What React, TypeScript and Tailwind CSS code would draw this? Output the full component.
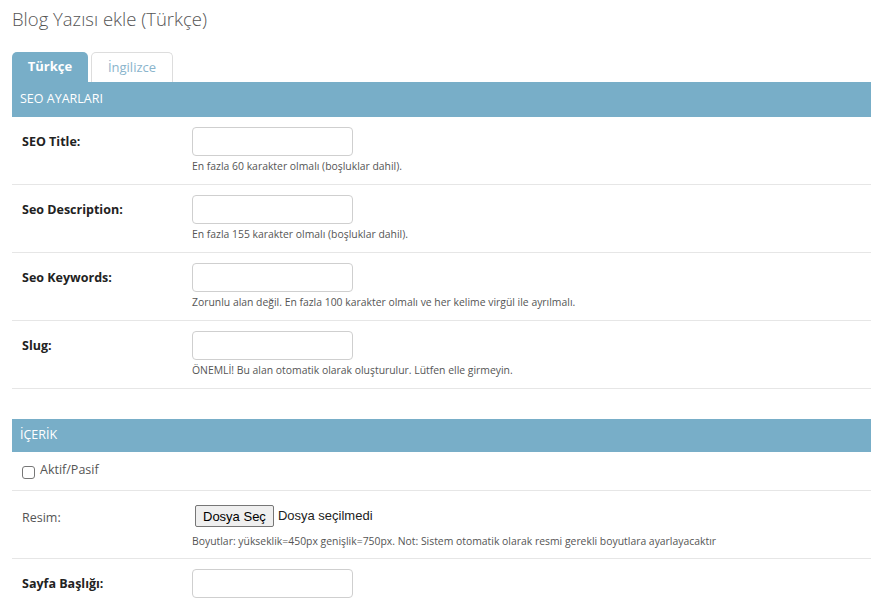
import React from "react";

const font = { fontFamily: '"Open Sans", "Noto Sans", sans-serif' };

function Row({ label, bold = true, help, children }: { label: string; bold?: boolean; help?: string; children?: React.ReactNode }) {
  return (
    <div className="flex border-b border-[#e6e6e6] h-[68px] pt-[10px]">
      <div className={`w-[180px] pl-[10px] pt-[6px] text-[12.5px] ${bold ? "font-bold text-[#222]" : "text-[#555]"}`}>{label}</div>
      <div className="flex flex-col">
        {children ?? <input className="w-[161px] h-[29px] border border-[#cfcfcf] rounded-[4px] bg-white" />}
        {help && <div className="mt-[3px] text-[10.4px] text-[#555] leading-[15px]">{help}</div>}
      </div>
    </div>
  );
}

export default function App() {
  return (
    <div style={font} className="bg-white w-[884px] h-[607px] overflow-hidden pl-[12px] pr-[13px]">
      <div className="pt-[6px] h-[52px] text-[18.5px] font-light text-[#555] leading-[26px]">Blog Yazısı ekle (Türkçe)</div>
      <div className="flex items-end h-[30px] gap-[3px]">
        <div className="w-[76px] h-[30px] bg-[#78aec8] rounded-t-[5px] text-white font-bold text-[13px] flex items-center justify-center">Türkçe</div>
        <div className="w-[82px] h-[30px] border border-b-0 border-[#ddd] rounded-t-[5px] text-[#8ab4cc] text-[13px] flex items-center justify-center">İngilizce</div>
      </div>
      <div className="h-[35px] bg-[#78aec8] text-white text-[12.5px] flex items-center pl-[8px]">SEO AYARLARI</div>
      <Row label="SEO Title:" help="En fazla 60 karakter olmalı (boşluklar dahil)." />
      <Row label="Seo Description:" help="En fazla 155 karakter olmalı (boşluklar dahil)." />
      <Row label="Seo Keywords:" help="Zorunlu alan değil. En fazla 100 karakter olmalı ve her kelime virgül ile ayrılmalı." />
      <Row label="Slug:" help="ÖNEMLİ! Bu alan otomatik olarak oluşturulur. Lütfen elle girmeyin." />
      <div className="h-[30px]" />
      <div className="h-[33px] bg-[#78aec8] text-white text-[12.5px] flex items-center pl-[8px]">İÇERİK</div>
      <div className="h-[39px] border-b border-[#e6e6e6] flex items-center pl-[10px] gap-[5px] text-[12.5px] text-[#555]">
        <span className="w-[13px] h-[13px] border border-[#777] rounded-[3px] mt-[2px] inline-block" />
        <span className="-mt-[2px]">Aktif/Pasif</span>
      </div>
      <div className="flex border-b border-[#e6e6e6] h-[68px] pt-[14px]">
        <div className="w-[180px] pl-[10px] pt-[4px] text-[12.5px] text-[#555]">Resim:</div>
        <div className="flex flex-col">
          <div className="flex items-center gap-[4px] pl-[3px]" style={{ fontFamily: '"Liberation Sans", Arial, sans-serif' }}>
            <button className="h-[22px] px-[7px] border border-[#767676] rounded-[2px] bg-[#efefef] text-[13px] text-black leading-none">Dosya Seç</button>
            <span className="text-[13px] text-[#222]">Dosya seçilmedi</span>
          </div>
          <div className="mt-[7px] text-[10.4px] text-[#555] leading-[15px]">Boyutlar: yükseklik=450px genişlik=750px. Not: Sistem otomatik olarak resmi gerekli boyutlara ayarlayacaktır</div>
        </div>
      </div>
      <Row label="Sayfa Başlığı:" />
    </div>
  );
}
